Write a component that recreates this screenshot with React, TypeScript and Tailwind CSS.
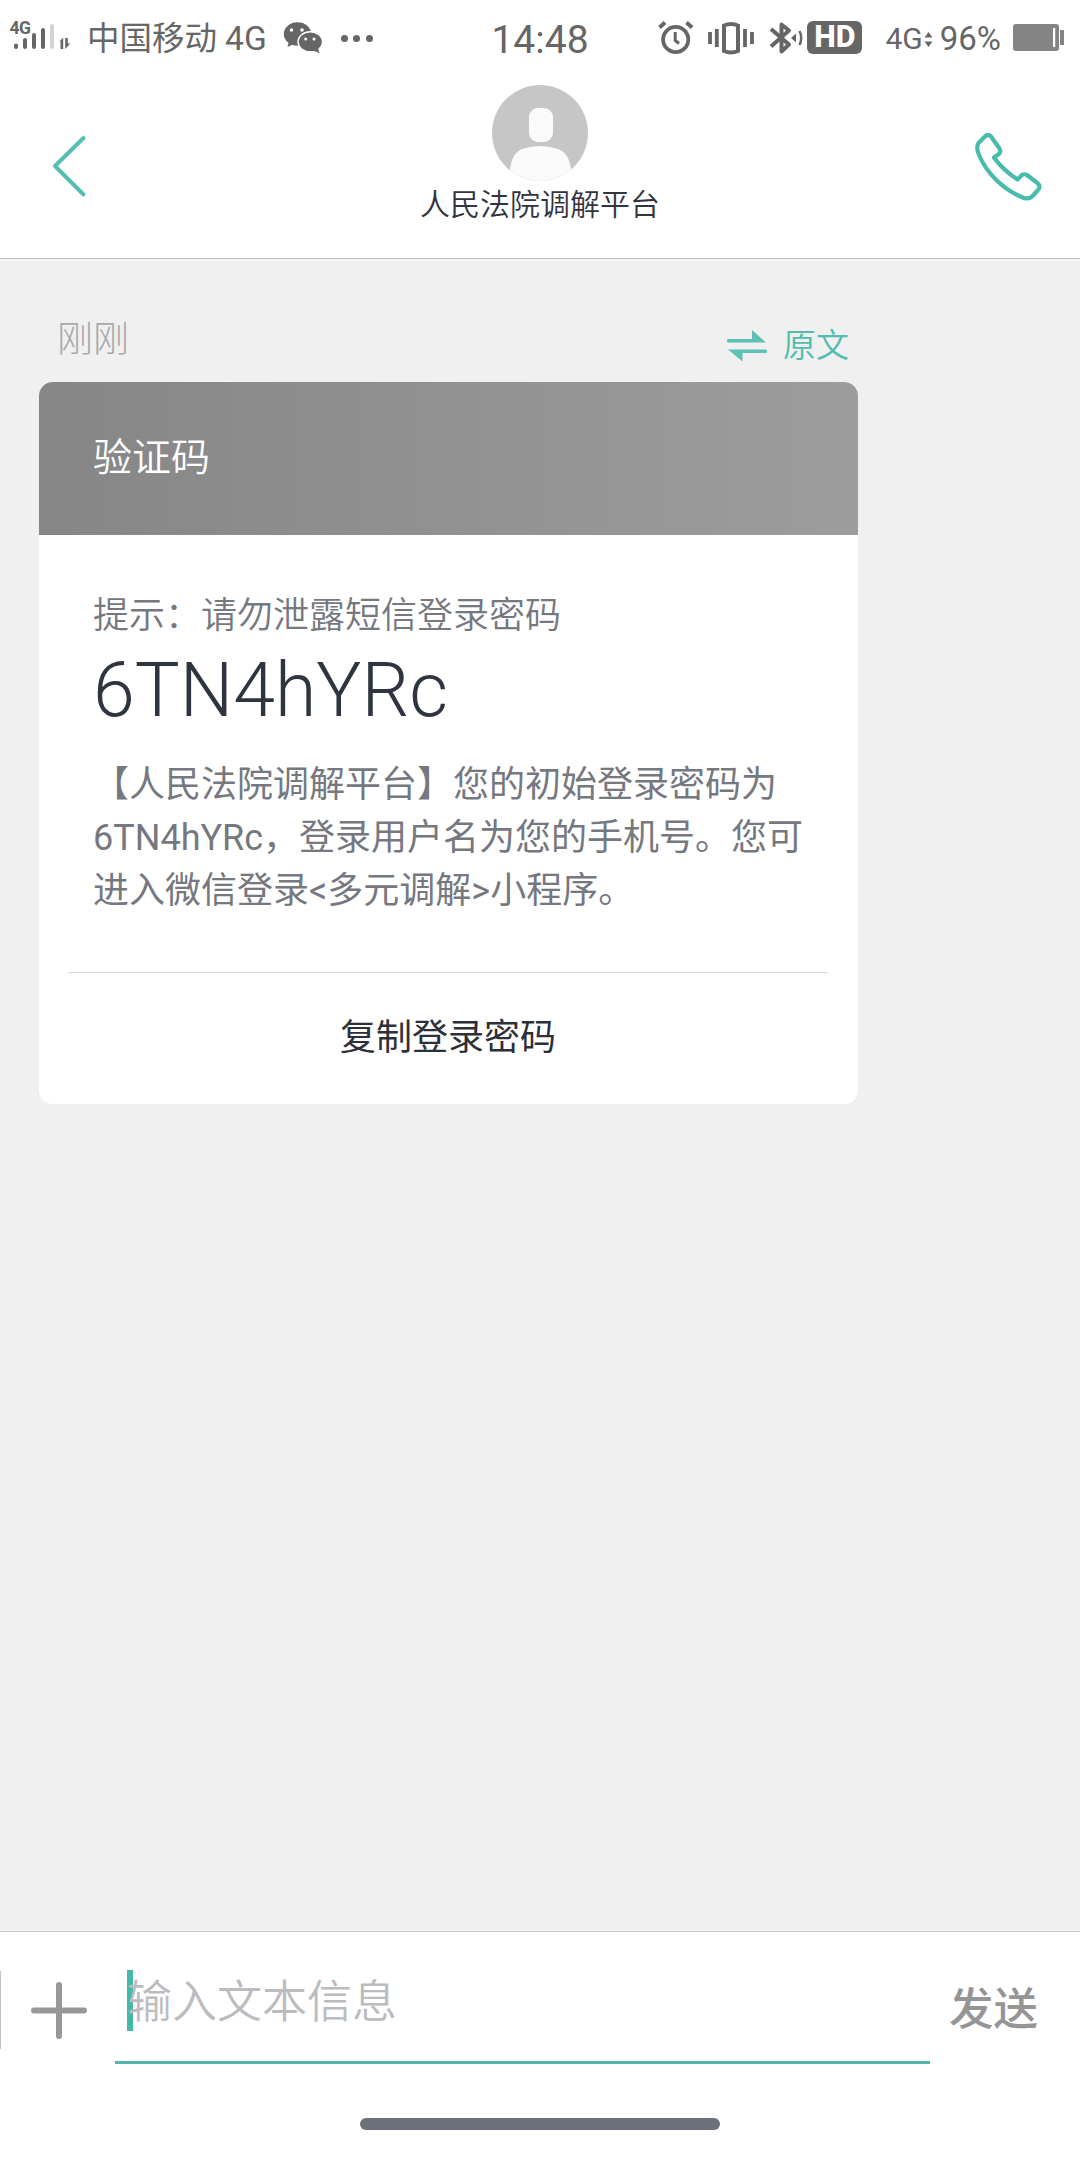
import { useState } from 'react';

const message = {
  time: '刚刚',
  title: '验证码',
  tip: '提示：请勿泄露短信登录密码',
  code: '6TN4hYRc',
  lines: [
    '【人民法院调解平台】您的初始登录密码为',
    '6TN4hYRc，登录用户名为您的手机号。您可',
    '进入微信登录<多元调解>小程序。',
  ],
};

function SignalIcon() {
  return (
    <svg width="64" height="40" viewBox="9 18 64 40" fill="#666">
      <text x="9.5" y="34" fontSize="17.5" fontWeight="700" textLength="21.5">4G</text>
      <g stroke="#666" strokeWidth="4" strokeLinecap="round">
        <path d="M16 45.5v1.5M25 40v7M34 35v12M43 30v17" />
        <path d="M52 26v21" stroke="#d2d2d2" />
      </g>
      <path d="M59 42l4.2-4.5V49h-2.700v-8zM65.200 38h2.600v5.500h2.500l-5.100 5.500z" />
    </svg>
  );
}

function WechatIcon() {
  return (
    <svg width="40" height="34" viewBox="282 22 40 34" fill="#666">
      <ellipse cx="296.500" cy="35" rx="13.700" ry="11.700" />
      <path d="M288 42l-1.500 6 6.500-3z" />
      <ellipse cx="309.300" cy="42.800" rx="13" ry="10.800" fill="#fff" />
      <ellipse cx="309.300" cy="42.800" rx="11.500" ry="9.300" />
      <path d="M311 51l7.500 3.200-1.500-5.200z" />
      <g fill="#fff">
        <circle cx="290.500" cy="31" r="1.800" />
        <circle cx="301" cy="31" r="1.800" />
        <circle cx="304.700" cy="40" r="1.500" />
        <circle cx="313" cy="40" r="1.500" />
      </g>
    </svg>
  );
}

function AlarmIcon() {
  return (
    <svg width="36" height="36" viewBox="658 20 36 36" fill="none" stroke="#666" strokeWidth="3.800">
      <circle cx="675.700" cy="39.500" r="12.600" />
      <path d="M675.200 32v8.500l3.800 3" strokeWidth="3" />
      <path d="M659.500 27.500l5.500-5M692 27.500l-5.500-5" strokeWidth="4" />
    </svg>
  );
}

function VibrateIcon() {
  return (
    <svg width="48" height="36" viewBox="707 20 48 36" fill="none" stroke="#666" strokeWidth="3.800">
      <path d="M724 25.500q7-3 14 0v25.500q-7 3-14 0z" strokeWidth="4" />
      <path d="M710 32v12M716.800 29v18M745 29v18M752 32v12" />
    </svg>
  );
}

function BluetoothIcon() {
  return (
    <svg width="36" height="36" viewBox="769 20 36 36" fill="none" stroke="#666" strokeWidth="4">
      <path d="M771 29l18 15.500-7.500 7v-27l7.500 6-18 16" strokeLinejoin="round" />
      <path d="M791 38l5-4.500v9z" fill="#666" stroke="none" />
      <path d="M799.500 31q3.500 7 0 14" strokeWidth="2.500" />
    </svg>
  );
}

function BatteryIcon() {
  return (
    <svg width="52" height="28" viewBox="1013 24 52 28" fill="#848484">
      <rect x="1013" y="24" width="46" height="27" rx="3" />
      <rect x="1053" y="28" width="2.200" height="19" fill="#fff" />
      <rect x="1060" y="30" width="4" height="15" />
    </svg>
  );
}

function StatusBar() {
  return (
    <div className="grid h-[76px] grid-cols-[1fr_auto_1fr] items-center text-[#666]">
      <div className="flex items-center pl-[9px]">
        <SignalIcon />
        <span className="ml-[14px] pt-[2px] text-[32.500px] leading-[40px]">
          中国移动 <span className="text-[33.500px]">4G</span>
        </span>
        <span className="ml-[16px]"><WechatIcon /></span>
        <span className="ml-[18px] flex gap-[5.500px]">
          <i className="size-[7px] rounded-full bg-[#666]" />
          <i className="size-[7px] rounded-full bg-[#666]" />
          <i className="size-[7px] rounded-full bg-[#666]" />
        </span>
      </div>
      <span className="pt-[3px] text-[39px] leading-[40px]">14:48</span>
      <div className="flex items-center justify-end pr-[15px]">
        <AlarmIcon />
        <span className="ml-[13px]"><VibrateIcon /></span>
        <span className="ml-[14px]"><BluetoothIcon /></span>
        <span className="ml-[2px] -mt-[2px] flex h-[33px] w-[55px] items-center justify-center rounded-[6px] bg-[#666] text-[30.500px] leading-none font-extrabold text-white">
          HD
        </span>
        <span className="ml-[23px] pt-[2px] text-[30px] leading-[40px]">4G</span>
        <svg className="mt-[3px] ml-[1px]" width="9" height="15" viewBox="0 0 9 15" fill="#666">
          <path d="M4.500 0L8.500 5.500h-8zM4.500 15L.5 9.500h8z" />
        </svg>
        <span className="ml-[7px] pt-[2px] text-[33px] leading-[40px]">96%</span>
        <span className="ml-[12px]"><BatteryIcon /></span>
      </div>
    </div>
  );
}

function Header() {
  return (
    <div className="flex h-[183px] items-start justify-between border-b border-[#bdbdbd]">
      <button type="button" aria-label="返回" className="mt-[58px] ml-[50px] w-[70px]">
        <svg width="38" height="64" viewBox="50 134 38 64" fill="none" stroke="#56bfb2" strokeWidth="4" strokeLinecap="round" strokeLinejoin="round">
          <path d="M83.500 138L55 166l28.500 28.500" />
        </svg>
      </button>
      <div className="flex flex-col items-center pt-[9px]">
        <svg width="96" height="96" viewBox="0 0 96 96">
          <defs>
            <clipPath id="avatar">
              <circle cx="48" cy="48" r="48" />
            </clipPath>
          </defs>
          <g clipPath="url(#avatar)">
            <rect width="96" height="96" fill="#c6c6c6" />
            <rect x="37" y="23" width="24" height="34" rx="9" fill="#fafafa" />
            <path d="M18 96V84q2-16 12-20 18-6 36 0 11 4 13 20v12z" fill="#fafafa" />
          </g>
        </svg>
        <span className="mt-[4px] text-[30px] leading-[40px] font-[350] text-[#32353f]">人民法院调解平台</span>
      </div>
      <button type="button" aria-label="拨打电话" className="mt-[54px] mr-[36px] flex w-[84px] justify-end">
        <svg width="72" height="72" viewBox="972 130 72 72" fill="none" stroke="#48bbaa" strokeWidth="4.200" strokeLinejoin="round">
          <path d="M994 157.500C1000 166 1009 174 1017.500 179.500L1022 175Q1024 173.500 1027 175L1038 183.500Q1041 186.500 1038 190L1032.500 196Q1029.500 199.500 1024 198C1004 190.500 987 173.500 979.500 156Q975.500 148 978.500 143L985 136.500Q988 133.500 991 136.500L999.500 148.500Q1001 151.500 999.500 153.500Z" />
        </svg>
      </button>
    </div>
  );
}

function MessageCard() {
  return (
    <div className="h-[722px] w-[819px] overflow-hidden rounded-[14px] bg-white">
      <div className="flex h-[153px] items-center bg-linear-to-r from-[#868686] to-[#9d9d9d] pl-[54px] text-[39px] font-[350] text-white">
        {message.title}
      </div>
      <div className="h-[437px] pt-[55px] pl-[54px] text-[36px] leading-[53px] text-[#75787f]">
        <p className="font-[350]">{message.tip}</p>
        <p className="h-[90px] text-[75.300px] leading-[95px] font-light text-[#2f3441]">{message.code}</p>
        <div className="mt-[26px]">
          {message.lines.map((line) => (
            <p key={line} className="whitespace-nowrap">{line}</p>
          ))}
        </div>
      </div>
      <button type="button" className="mx-[29px] flex h-[130px] w-[760px] items-center justify-center border-t border-[#d6d6d9] text-[36px] text-[#2d3038]">
        复制登录密码
      </button>
    </div>
  );
}

function Composer() {
  const [text, setText] = useState('');

  return (
    <div className="flex h-[229px] flex-col border-t border-[#c8c8c8] bg-white">
      <div className="flex h-[134px] items-start">
        <i className="mt-[39px] h-[78px] w-px bg-[#c4c4c4]" />
        <button type="button" aria-label="更多" className="mt-[50px] ml-[30px]">
          <svg width="56" height="57" viewBox="0 0 56 57" stroke="#989898" strokeWidth="6" strokeLinecap="round">
            <path d="M28 3v51M3 28.500h50" />
          </svg>
        </button>
        <label className="ml-[28px] flex h-[132px] w-[815px] items-start border-b-[3px] border-[#55b5a9] pt-[38px] pl-[12px]">
          <i className="h-[61px] w-[6px] shrink-0 bg-[#45b8a8]" />
          <input
            className="mt-[2px] -ml-[6px] h-[61px] w-full bg-transparent text-[45px] font-[350] outline-none placeholder:text-[#bcbcc0]"
            placeholder="输入文本信息"
            value={text}
            onChange={(e) => setText(e.target.value)}
          />
        </label>
        <button type="button" className="mt-[45px] ml-[19px] text-[44.500px] leading-[66px] font-medium text-[#959595]">
          发送
        </button>
      </div>
      <div className="mt-[52px] h-[12px] w-[360px] self-center rounded-full bg-[#6d717c]" />
    </div>
  );
}

export default function App() {
  return (
    <div className="flex h-[2160px] w-[1080px] flex-col overflow-hidden bg-[#f0f0f0] font-['Roboto','Noto_Sans_CJK_SC',sans-serif]">
      <div className="bg-white">
        <StatusBar />
        <Header />
      </div>
      <div className="h-[4px] border-b border-[#e8e8e8] bg-[#f4f4f4]" />
      <main className="flex-1 pl-[39px]">
        <div className="flex h-[119px] w-[819px] items-start justify-between pr-[9px] pl-[18px]">
          <span className="mt-[51px] text-[36px] leading-[53px] font-light text-[#a9a9a9]">{message.time}</span>
          <span className="mt-[58px] flex items-center text-[33px] leading-[50px] font-[350] text-[#50bdaf]">
            <svg className="mr-[16px]" width="40" height="32" viewBox="0 0 40 32" fill="#5cc0b4">
              <path d="M1.500 9H25V0l14 12.500H1.500a1.750 1.750 0 0 1 0-3.500zM38.500 19.500H1l14.500 12V23h23a1.750 1.750 0 0 0 0-3.500z" />
            </svg>
            原文
          </span>
        </div>
        <MessageCard />
      </main>
      <Composer />
    </div>
  );
}
